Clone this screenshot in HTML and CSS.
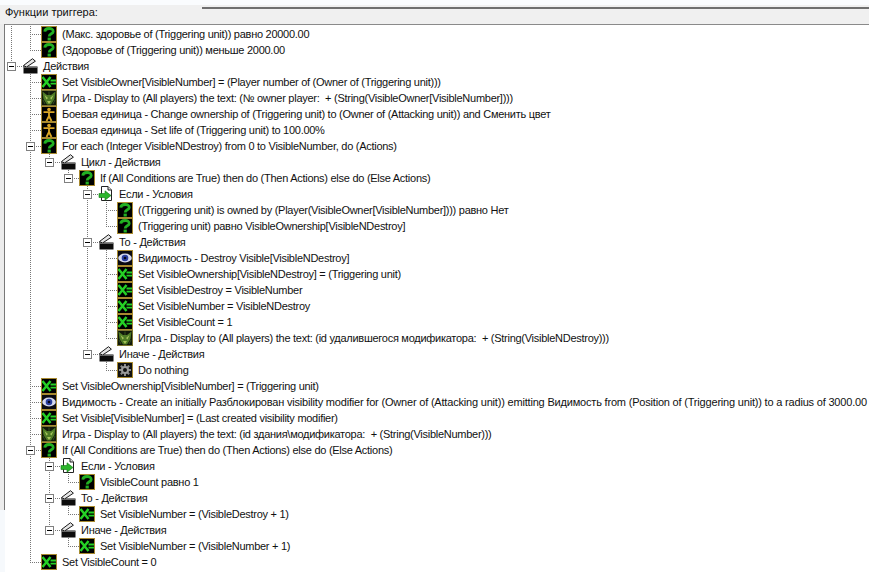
FILE: index.html
```html
<!DOCTYPE html>
<html lang="ru">
<head>
<meta charset="utf-8">
<title>Функции триггера</title>
<link rel="stylesheet" href="styles.css">
</head>
<body>
<svg class="defs" aria-hidden="true">
<symbol id="q" viewBox="0 0 16 16"><rect x=".5" y=".5" width="15" height="15" fill="#000" stroke="#a88a30"/><path d="M3.8 5.6C4 1.6 12.2 1.4 12.2 5.4C12.2 8 8.2 7.6 8.2 10.6" fill="none" stroke="#22b022" stroke-width="2.8"/><rect x="6.6" y="11.6" width="3.2" height="2.9" fill="#22b022"/></symbol>
<symbol id="x" viewBox="0 0 16 16"><rect x=".5" y=".5" width="15" height="15" fill="#000" stroke="#a88a30"/><path d="M1.5 3L9.5 13M9.5 3L1.5 13" fill="none" stroke="#25d025" stroke-width="2.5"/><path d="M9.5 6.5H15M9.5 9.7H15" fill="none" stroke="#25d025" stroke-width="1.8"/></symbol>
<symbol id="game" viewBox="0 0 16 16"><rect x=".5" y=".5" width="15" height="15" fill="#10180a" stroke="#7c7430"/><path d="M1.5 1.5L6 5H10L14.5 1.5L13.5 9L10 14.5H6L2.5 9Z" fill="#4d7a25"/><path d="M3.5 5L7 8L5.5 9.5ZM12.5 5L9 8L10.5 9.5ZM6 11H10L8 14Z" fill="#a5c45a"/><path d="M2 10L4 14M14 10L12 14M8 1.5V5" stroke="#334f1c" fill="none"/></symbol>
<symbol id="unit" viewBox="0 0 16 16"><rect x=".5" y=".5" width="15" height="15" fill="#000" stroke="#a88a30"/><circle cx="8" cy="3.6" r="1.8" fill="#dba726"/><path d="M2.5 6.2H13.5M8 6V10M8 10L5.5 15M8 10L10.5 15" fill="none" stroke="#dba726" stroke-width="1.8"/></symbol>
<symbol id="eye" viewBox="0 0 16 16"><rect x=".5" y=".5" width="15" height="15" fill="#0a0a12" stroke="#a88a30"/><ellipse cx="8" cy="8" rx="6.8" ry="4.4" fill="#d5d9ee"/><circle cx="8" cy="8" r="3.3" fill="#2b3f9f"/><circle cx="8" cy="8" r="1.3" fill="#05051a"/></symbol>
<symbol id="clap" viewBox="0 0 16 16"><path d="M1.5 8.5H15.5V15.5H1.5Z" fill="#0c0c0c"/><path d="M1.5 7.5L10.5 .7L13.4 3.2L4.5 9Z" fill="#e6e6e6" stroke="#1a1a1a"/><path d="M2 9.5H15" stroke="#666"/></symbol>
<symbol id="cond" viewBox="0 0 16 16"><path d="M3.5 .5H10L13.5 4V14.5H3.5Z" fill="#fff" stroke="#222"/><path d="M10 .5V4H13.5" fill="#ddd" stroke="#222"/><path d="M1 7.5H7V4.8L13 9.5L7 14.2V11.5H1Z" fill="#2cb52c" stroke="#117711" stroke-width=".6"/></symbol>
<symbol id="gear" viewBox="0 0 16 16"><rect x=".5" y=".5" width="15" height="15" fill="#111" stroke="#a88a30"/><path d="M8 2V14M2 8H14M3.8 3.8L12.2 12.2M12.2 3.8L3.8 12.2" stroke="#8c8c8c" stroke-width="2"/><circle cx="8" cy="8" r="4" fill="#9a9a9a"/><circle cx="8" cy="8" r="2" fill="#111"/></symbol>
</svg>
<header class="head"><span class="title">Функции триггера:</span><span class="rule"></span></header>
<div class="main">
<div class="rail"><div class="rail-bar"></div></div>
<div class="tree">
<div class="row"><span class="c g"></span><span class="c t"></span><svg class="ic"><use href="#q"/></svg><span class="tx">(Макс. здоровье of (Triggering unit)) равно 20000.00</span></div>
<div class="row"><span class="c g"></span><span class="c l"></span><svg class="ic"><use href="#q"/></svg><span class="tx">(Здоровье of (Triggering unit)) меньше 2000.00</span></div>
<div class="row"><span class="c xl"><i class="box"></i></span><svg class="ic"><use href="#clap"/></svg><span class="tx">Действия</span></div>
<div class="row"><span class="c"></span><span class="c t"></span><svg class="ic"><use href="#x"/></svg><span class="tx">Set VisibleOwner[VisibleNumber] = (Player number of (Owner of (Triggering unit)))</span></div>
<div class="row"><span class="c"></span><span class="c t"></span><svg class="ic"><use href="#game"/></svg><span class="tx">Игра - Display to (All players) the text: (№ owner player:&nbsp; + (String(VisibleOwner[VisibleNumber])))</span></div>
<div class="row"><span class="c"></span><span class="c t"></span><svg class="ic"><use href="#unit"/></svg><span class="tx">Боевая единица - Change ownership of (Triggering unit) to (Owner of (Attacking unit)) and Сменить цвет</span></div>
<div class="row"><span class="c"></span><span class="c t"></span><svg class="ic"><use href="#unit"/></svg><span class="tx">Боевая единица - Set life of (Triggering unit) to 100.00%</span></div>
<div class="row"><span class="c"></span><span class="c xt"><i class="box"></i></span><svg class="ic"><use href="#q"/></svg><span class="tx">For each (Integer VisibleNDestroy) from 0 to VisibleNumber, do (Actions)</span></div>
<div class="row"><span class="c"></span><span class="c g"></span><span class="c xl"><i class="box"></i></span><svg class="ic"><use href="#clap"/></svg><span class="tx">Цикл - Действия</span></div>
<div class="row"><span class="c"></span><span class="c g"></span><span class="c"></span><span class="c xl"><i class="box"></i></span><svg class="ic"><use href="#q"/></svg><span class="tx">If (All Conditions are True) then do (Then Actions) else do (Else Actions)</span></div>
<div class="row"><span class="c"></span><span class="c g"></span><span class="c"></span><span class="c"></span><span class="c xt"><i class="box"></i></span><svg class="ic"><use href="#cond"/></svg><span class="tx">Если - Условия</span></div>
<div class="row"><span class="c"></span><span class="c g"></span><span class="c"></span><span class="c"></span><span class="c g"></span><span class="c t"></span><svg class="ic"><use href="#q"/></svg><span class="tx">((Triggering unit) is owned by (Player(VisibleOwner[VisibleNumber]))) равно Нет</span></div>
<div class="row"><span class="c"></span><span class="c g"></span><span class="c"></span><span class="c"></span><span class="c g"></span><span class="c l"></span><svg class="ic"><use href="#q"/></svg><span class="tx">(Triggering unit) равно VisibleOwnership[VisibleNDestroy]</span></div>
<div class="row"><span class="c"></span><span class="c g"></span><span class="c"></span><span class="c"></span><span class="c xt"><i class="box"></i></span><svg class="ic"><use href="#clap"/></svg><span class="tx">То - Действия</span></div>
<div class="row"><span class="c"></span><span class="c g"></span><span class="c"></span><span class="c"></span><span class="c g"></span><span class="c t"></span><svg class="ic"><use href="#eye"/></svg><span class="tx">Видимость - Destroy Visible[VisibleNDestroy]</span></div>
<div class="row"><span class="c"></span><span class="c g"></span><span class="c"></span><span class="c"></span><span class="c g"></span><span class="c t"></span><svg class="ic"><use href="#x"/></svg><span class="tx">Set VisibleOwnership[VisibleNDestroy] = (Triggering unit)</span></div>
<div class="row"><span class="c"></span><span class="c g"></span><span class="c"></span><span class="c"></span><span class="c g"></span><span class="c t"></span><svg class="ic"><use href="#x"/></svg><span class="tx">Set VisibleDestroy = VisibleNumber</span></div>
<div class="row"><span class="c"></span><span class="c g"></span><span class="c"></span><span class="c"></span><span class="c g"></span><span class="c t"></span><svg class="ic"><use href="#x"/></svg><span class="tx">Set VisibleNumber = VisibleNDestroy</span></div>
<div class="row"><span class="c"></span><span class="c g"></span><span class="c"></span><span class="c"></span><span class="c g"></span><span class="c t"></span><svg class="ic"><use href="#x"/></svg><span class="tx">Set VisibleCount = 1</span></div>
<div class="row"><span class="c"></span><span class="c g"></span><span class="c"></span><span class="c"></span><span class="c g"></span><span class="c l"></span><svg class="ic"><use href="#game"/></svg><span class="tx">Игра - Display to (All players) the text: (id удалившегося модификатора:&nbsp; + (String(VisibleNDestroy)))</span></div>
<div class="row"><span class="c"></span><span class="c g"></span><span class="c"></span><span class="c"></span><span class="c xl"><i class="box"></i></span><svg class="ic"><use href="#clap"/></svg><span class="tx">Иначе - Действия</span></div>
<div class="row"><span class="c"></span><span class="c g"></span><span class="c"></span><span class="c"></span><span class="c"></span><span class="c l"></span><svg class="ic"><use href="#gear"/></svg><span class="tx">Do nothing</span></div>
<div class="row"><span class="c"></span><span class="c t"></span><svg class="ic"><use href="#x"/></svg><span class="tx">Set VisibleOwnership[VisibleNumber] = (Triggering unit)</span></div>
<div class="row"><span class="c"></span><span class="c t"></span><svg class="ic"><use href="#eye"/></svg><span class="tx tx-long">Видимость - Create an initially Разблокирован visibility modifier for (Owner of (Attacking unit)) emitting Видимость from (Position of (Triggering unit)) to a radius of 3000.00</span></div>
<div class="row"><span class="c"></span><span class="c t"></span><svg class="ic"><use href="#x"/></svg><span class="tx">Set Visible[VisibleNumber] = (Last created visibility modifier)</span></div>
<div class="row"><span class="c"></span><span class="c t"></span><svg class="ic"><use href="#game"/></svg><span class="tx">Игра - Display to (All players) the text: (id здания\модификатора:&nbsp; + (String(VisibleNumber)))</span></div>
<div class="row"><span class="c"></span><span class="c xt"><i class="box"></i></span><svg class="ic"><use href="#q"/></svg><span class="tx">If (All Conditions are True) then do (Then Actions) else do (Else Actions)</span></div>
<div class="row"><span class="c"></span><span class="c g"></span><span class="c xt"><i class="box"></i></span><svg class="ic"><use href="#cond"/></svg><span class="tx">Если - Условия</span></div>
<div class="row"><span class="c"></span><span class="c g"></span><span class="c g"></span><span class="c l"></span><svg class="ic"><use href="#q"/></svg><span class="tx">VisibleCount равно 1</span></div>
<div class="row"><span class="c"></span><span class="c g"></span><span class="c xt"><i class="box"></i></span><svg class="ic"><use href="#clap"/></svg><span class="tx">То - Действия</span></div>
<div class="row"><span class="c"></span><span class="c g"></span><span class="c g"></span><span class="c l"></span><svg class="ic"><use href="#x"/></svg><span class="tx">Set VisibleNumber = (VisibleDestroy + 1)</span></div>
<div class="row"><span class="c"></span><span class="c g"></span><span class="c xl"><i class="box"></i></span><svg class="ic"><use href="#clap"/></svg><span class="tx">Иначе - Действия</span></div>
<div class="row"><span class="c"></span><span class="c g"></span><span class="c"></span><span class="c l"></span><svg class="ic"><use href="#x"/></svg><span class="tx">Set VisibleNumber = (VisibleNumber + 1)</span></div>
<div class="row"><span class="c"></span><span class="c l"></span><svg class="ic"><use href="#x"/></svg><span class="tx">Set VisibleCount = 0</span></div>
</div>
</div>
</body>
</html>
```
FILE: styles.css
```css
html, body {
  margin: 0;
  height: 100%;
  overflow: hidden;
  background: #fff;
}
body {
  font: 11px/16px "Liberation Sans", Arial, sans-serif;
  color: #111;
}
.defs {
  display: none;
}
.head {
  display: flex;
  align-items: flex-start;
  height: 19px;
  padding-left: 5px;
  background: #f0f0f0;
  border-top: 5px solid #fafcfe;
}
.title {
  flex: none;
  width: 197px;
  line-height: 15px;
}
.rule {
  flex: 1;
  height: 2px;
  margin-top: 2px;
  background: #6f6f6f;
}
.main {
  display: flex;
  align-items: flex-start;
}
.rail {
  flex: none;
  width: 5px;
  height: 548px;
  background: #f6f9fc;
}
.rail-bar {
  box-sizing: border-box;
  height: 486px;
  background: #ececec;
  border-right: 1px solid #787878;
}
.tree {
  flex: 1;
  min-width: 0;
  padding-top: 1px;
  border-top: 1px solid #8a8a8a;
  white-space: nowrap;
}
.row {
  display: flex;
  align-items: center;
  height: 16px;
}
.c {
  flex: none;
  display: flex;
  align-items: center;
  width: 19px;
  height: 16px;
  background-repeat: no-repeat;
}
.g, .t, .l, .xt, .xl {
  --v: repeating-linear-gradient(180deg, #777 0 1px, transparent 1px 2px);
  --h: repeating-linear-gradient(90deg, #777 0 1px, transparent 1px 2px);
}
.g {
  background-image: var(--v);
  background-size: 1px 16px;
  background-position: 6px 0;
}
.t, .xt {
  background-image: var(--v), var(--h);
  background-size: 1px 16px, 13px 1px;
  background-position: 6px 0, 6px 8px;
}
.l, .xl {
  background-image: var(--v), var(--h);
  background-size: 1px 9px, 13px 1px;
  background-position: 6px 0, 6px 8px;
}
.box {
  box-sizing: border-box;
  width: 9px;
  height: 9px;
  margin-left: 2px;
  border: 1px solid #808080;
  background: #fff linear-gradient(#000, #000) center / 5px 1px no-repeat;
}
.ic {
  flex: none;
  width: 16px;
  height: 16px;
  margin-left: -2px;
}
.tx {
  margin-left: 5px;
  letter-spacing: -0.27px;
}
.tx-long {
  letter-spacing: -0.19px;
}
```
